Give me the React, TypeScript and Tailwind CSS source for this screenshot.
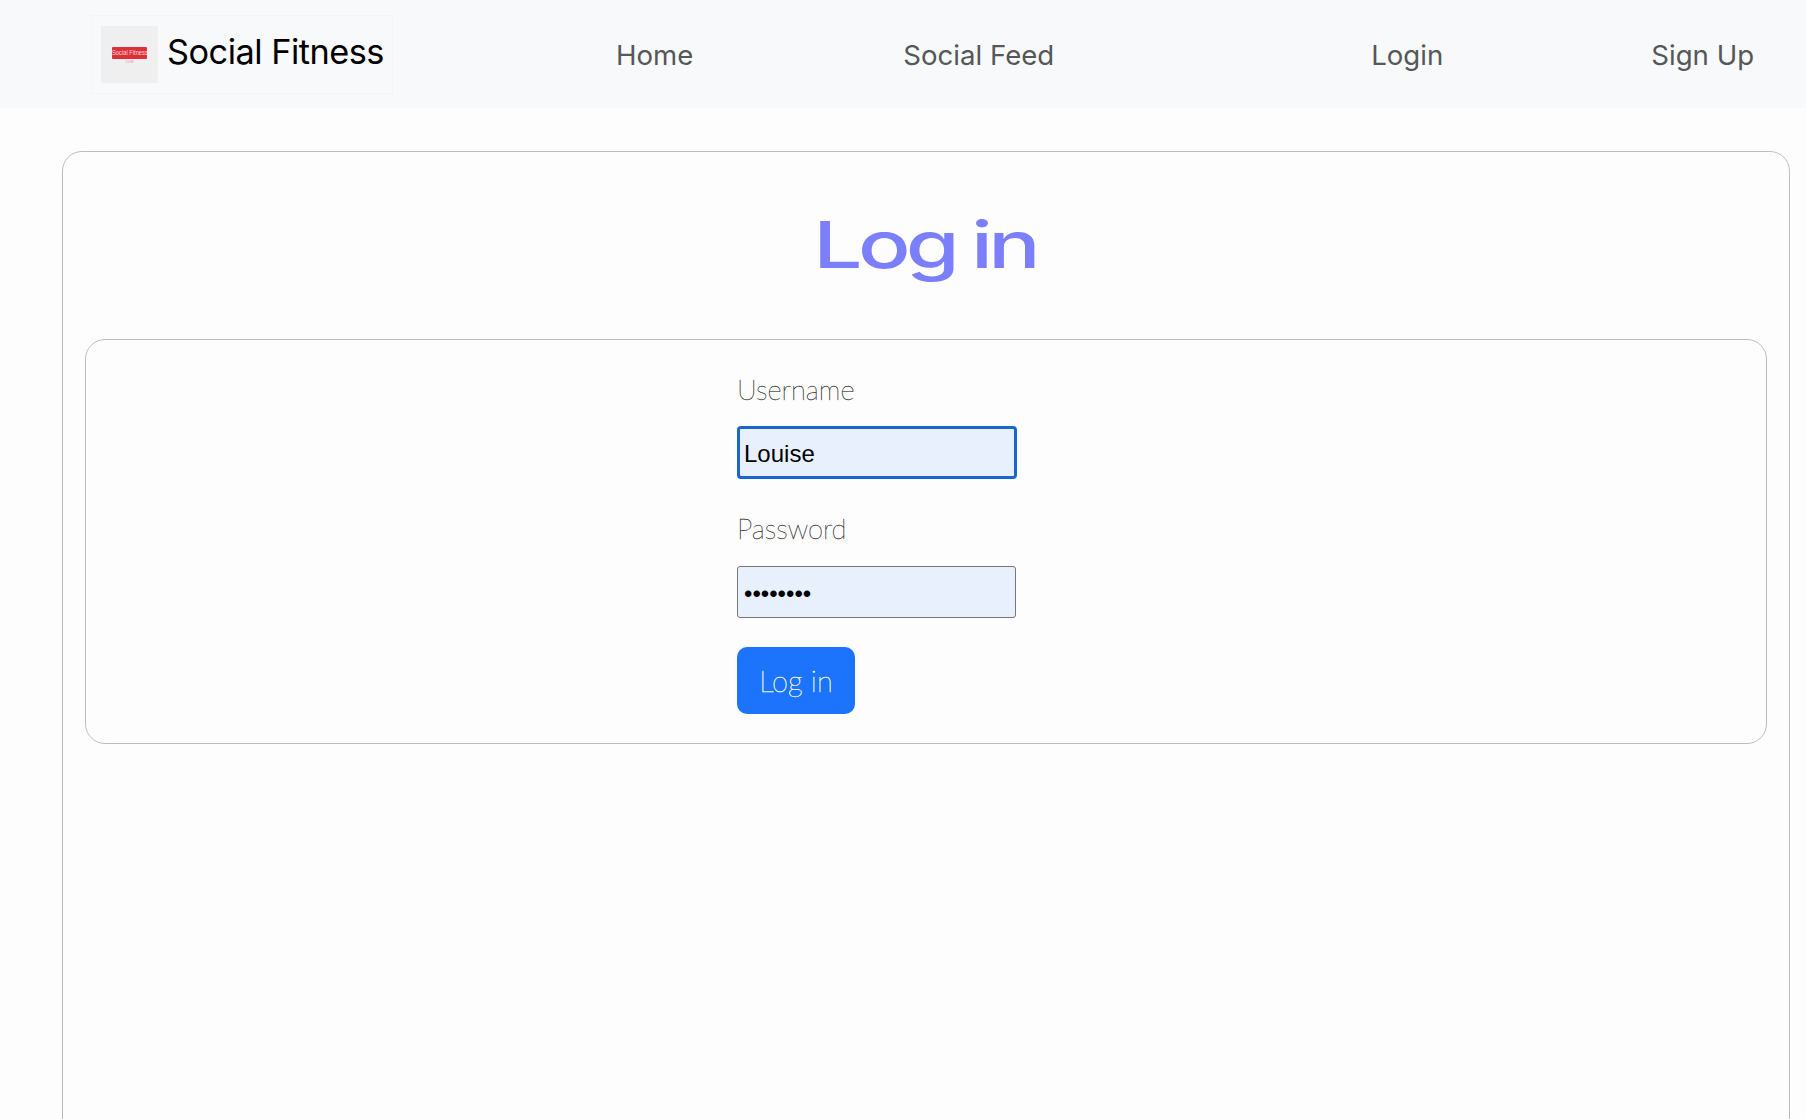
export default function App() {
  return (
    <div className="h-[1119px] overflow-hidden bg-[#fdfdfd] font-['Inter','Liberation_Sans',sans-serif]">
      <nav className="flex h-[108px] items-center bg-[#f8f9fa] pl-[91px] text-[27.6px] text-[#555758]">
        <a className="flex h-[79px] w-[302px] items-center gap-[9px] border border-[#f4f5f6] pl-[9px] text-[34.3px] tracking-[-0.5px] text-black">
          <span className="flex h-[57px] w-[57px] shrink-0 flex-col items-center justify-center bg-[#efefef]">
            <span className="mt-[3px] flex h-[12px] w-[35px] items-center justify-center overflow-hidden rounded-[1px] bg-[#dc2f38] font-['Liberation_Sans',sans-serif] text-[8px] leading-none tracking-normal whitespace-nowrap text-[#fbdcdc]">
              <span className="scale-x-[0.72]">Social Fitness</span>
            </span>
            <span className="mt-[2px] font-['Liberation_Sans',sans-serif] text-[3px] leading-none tracking-normal text-[#d88]">CLUB</span>
          </span>
          <span className="-mt-[5px] whitespace-nowrap">Social Fitness</span>
        </a>
        <a className="ml-[223px] mt-[4px]">Home</a>
        <a className="ml-[210px] mt-[4px]">Social Feed</a>
        <a className="ml-[317px] mt-[4px]">Login</a>
        <a className="ml-[208px] mt-[4px]">Sign Up</a>
      </nav>
      <main className="ml-[62px] mr-[16px] mt-[43px] h-[1100px] rounded-[20px] border border-[#bdbdbd] px-[22px] pt-[52px]">
        <h1 className="origin-center scale-x-[1.34] pr-[2px] text-center text-[65px] leading-[82px] font-medium tracking-[-3.5px] [word-spacing:-2px] text-[#7b7ffb]">
          Log in
        </h1>
        <section className="mt-[53px] h-[405px] rounded-[20px] border border-[#bdbdbd] pl-[651px] pt-[32px]">
          <form className="flex w-[280px] flex-col font-['Lato',sans-serif]">
            <label className="text-[27.4px] leading-[36px] font-thin text-[#333] [-webkit-text-stroke:0.3px_#333]">Username</label>
            <input
              readOnly
              value="Louise"
              className="mt-[18px] h-[53px] w-[280px] rounded-[4px] border-[3px] border-[#1a66cf] bg-[#e8f0fe] pl-[4px] pt-[3px] font-['Liberation_Sans',sans-serif] text-[24px] text-black outline-none"
            />
            <label className="mt-[32px] text-[27.4px] leading-[36px] font-thin text-[#333] [-webkit-text-stroke:0.3px_#333]">Password</label>
            <input
              readOnly
              type="password"
              value="password"
              className="mt-[19px] h-[52px] w-[279px] rounded-[3px] border border-[#767676] bg-[#e8f0fe] pl-[6px] pt-[3px] font-['Liberation_Sans',sans-serif] text-[24px] text-black outline-none"
            />
            <button
              type="button"
              className="mt-[29px] h-[67px] w-[118px] rounded-[10px] bg-[#1c74fc] text-[29px] font-thin text-white [-webkit-text-stroke:0.4px_#fff]"
            >
              Log in
            </button>
          </form>
        </section>
      </main>
    </div>
  );
}
